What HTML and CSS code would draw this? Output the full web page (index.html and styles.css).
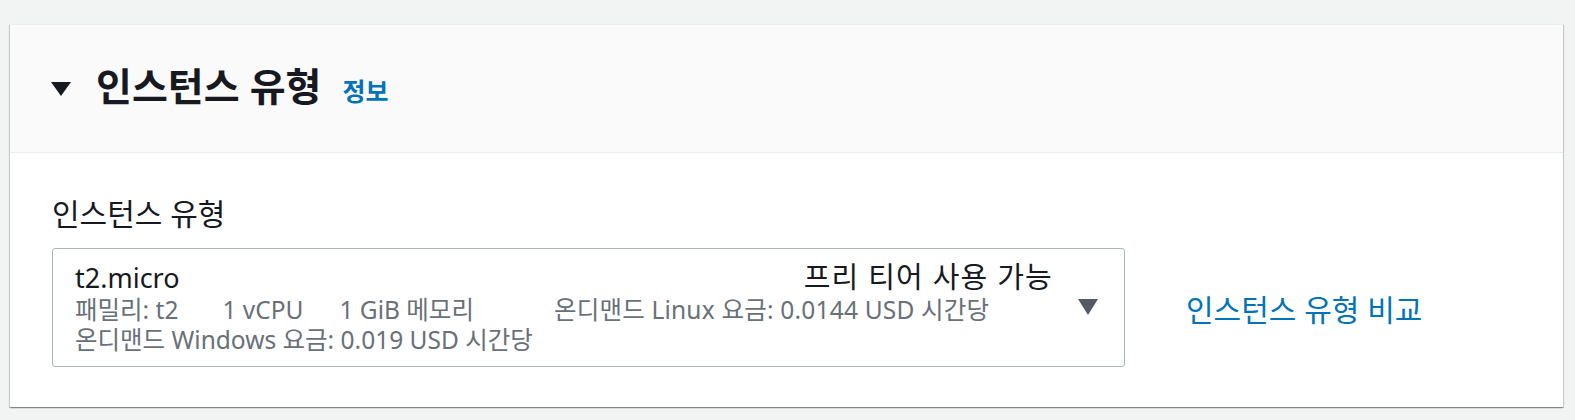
FILE: index.html
```html
<!DOCTYPE html>
<html lang="ko">
<head>
<meta charset="utf-8">
<title>인스턴스 유형</title>
<link rel="stylesheet" href="styles.css">
</head>
<body>
<section class="card">
  <header class="card-header">
    <svg class="caret" width="20" height="14" viewBox="0 0 20 14"><polygon points="0,0 20,0 10,14" fill="#16191f"/></svg>
    <h2 class="title">인스턴스 유형</h2>
    <a class="info" href="#">정보</a>
  </header>
  <div class="card-body">
    <div class="field-label">인스턴스 유형</div>
    <div class="field-row">
      <div class="select">
        <div class="select-content">
          <div class="select-top">
            <span class="select-value">t2.micro</span>
            <span class="select-tag">프리 티어 사용 가능</span>
          </div>
          <div class="select-desc">
            <span class="d1">패밀리: t2</span><span class="d2">1 vCPU</span><span class="d3">1 GiB 메모리</span><span class="d4">온디맨드 Linux 요금: 0.0144 USD 시간당</span>
          </div>
          <div class="select-desc">
            <span>온디맨드 Windows 요금: 0.019 USD 시간당</span>
          </div>
        </div>
        <svg class="arrow" width="20" height="16" viewBox="0 0 20 16"><polygon points="0,0 20,0 10,16" fill="#545b64"/></svg>
      </div>
      <a class="compare" href="#">인스턴스 유형 비교</a>
    </div>
  </div>
</section>
</body>
</html>
```

FILE: styles.css
```css
html, body {
  margin: 0;
  padding: 0;
}
body {
  background: #f2f3f3;
  padding: 24px 12px 13px 10px;
  font-family: "Noto Sans", "Noto Sans CJK KR", sans-serif;
  color: #16191f;
}
.card {
  background: #ffffff;
  box-shadow: 0 1px 1px 0 rgba(0, 28, 36, 0.3), 1px 1px 1px 0 rgba(0, 28, 36, 0.15), -1px 1px 1px 0 rgba(0, 28, 36, 0.15);
  border-top: 1px solid #eaeded;
}
.card-header {
  background: #fafafa;
  border-bottom: 1px solid #eaeded;
  height: 128px;
  box-sizing: border-box;
  padding: 0 41px;
  display: flex;
  align-items: center;
}
.caret {
  display: block;
  margin-top: 0;
}
.title {
  margin: 0 0 0 25px;
  font-size: 39px;
  font-weight: 700;
  line-height: 46px;
  margin-bottom: 6px;
}
.info {
  margin-left: 21px;
  margin-top: 2px;
  font-size: 25px;
  font-weight: 700;
  color: #0073bb;
  text-decoration: none;
}
.card-body {
  padding: 43px 41px 40px 42px;
}
.field-label {
  font-size: 30px;
  line-height: 36px;
  margin-bottom: 16px;
}
.field-row {
  display: flex;
  align-items: center;
}
.select {
  width: 1073px;
  height: 119px;
  box-sizing: border-box;
  border: 1px solid #aab7b8;
  border-radius: 3px;
  padding: 0 0 1px 22px;
  display: flex;
  align-items: center;
}
.select-content {
  flex: 1;
}
.select-top {
  display: flex;
  justify-content: space-between;
  align-items: baseline;
  line-height: 34px;
}
.select-value {
  font-size: 27px;
}
.select-tag {
  font-size: 29px;
  letter-spacing: 1.2px;
}
.select-desc {
  font-size: 24.5px;
  line-height: 30px;
  color: #687078;
  white-space: nowrap;
}
.d1 { margin-right: 44px; }
.d2 { margin-right: 36px; }
.d3 { margin-right: 80px; }
.d4 { letter-spacing: 0.2px; }
.arrow {
  display: block;
  margin: 0 26px 0 25px;
}
.compare {
  margin-left: 61px;
  font-size: 30px;
  color: #0073bb;
  text-decoration: none;
}
```
